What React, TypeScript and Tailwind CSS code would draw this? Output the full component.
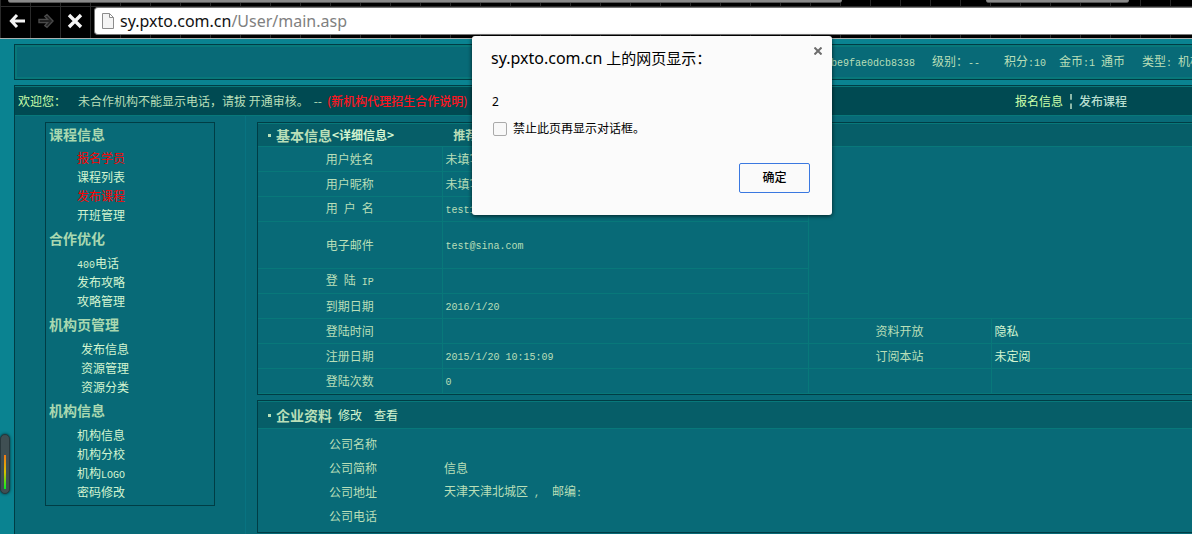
import { Fragment, type ReactNode } from "react";

type Item = { label: ReactNode; hot?: boolean };
type Group = { title: string; indent: string; items: Item[] };

/* Latin letters and digits are set in a half-width face next to the Chinese text. */
function Mono({ children }: { children: ReactNode }) {
  return (
    <span className="font-['Liberation_Mono','Noto_Sans_CJK_SC',monospace] text-[10px] whitespace-pre">
      {children}
    </span>
  );
}

const groups: Group[] = [
  {
    title: "课程信息",
    indent: "pl-[31px]",
    items: [
      { label: "报名学员", hot: true },
      { label: "课程列表" },
      { label: "发布课程", hot: true },
      { label: "开班管理" },
    ],
  },
  {
    title: "合作优化",
    indent: "pl-[31px]",
    items: [
      { label: <><Mono>400</Mono>电话</> },
      { label: "发布攻略" },
      { label: "攻略管理" },
    ],
  },
  {
    title: "机构页管理",
    indent: "pl-[35px]",
    items: [{ label: "发布信息" }, { label: "资源管理" }, { label: "资源分类" }],
  },
  {
    title: "机构信息",
    indent: "pl-[31px]",
    items: [
      { label: "机构信息" },
      { label: "机构分校" },
      { label: <>机构<Mono>LOGO</Mono></> },
      { label: "密码修改" },
    ],
  },
];

type Row = { label: ReactNode; value?: ReactNode; tall?: boolean; right?: [string, string] };

const rows: Row[] = [
  { label: "用户姓名", value: "未填写" },
  { label: "用户昵称", value: "未填写" },
  { label: <>用<Mono> </Mono>户<Mono> </Mono>名</>, value: <Mono>test123</Mono> },
  { label: "电子邮件", value: <Mono>test@sina.com</Mono>, tall: true },
  { label: <>登<Mono> </Mono>陆<Mono> IP</Mono></> },
  { label: "到期日期", value: <Mono>2016/1/20</Mono> },
  { label: "登陆时间", right: ["资料开放", "隐私"] },
  { label: "注册日期", value: <Mono>2015/1/20 10:15:09</Mono>, right: ["订阅本站", "未定阅"] },
  { label: "登陆次数", value: <Mono>0</Mono>, right: ["", ""] },
];

const company: [string, ReactNode][] = [
  ["公司名称", ""],
  ["公司简称", "信息"],
  ["公司地址", <span className="whitespace-pre">天津天津北城区<Mono> ,  </Mono>邮编<Mono>:</Mono></span>],
  ["公司电话", ""],
];

function BrowserBar() {
  return (
    <header className="border-b border-[#a9b0b0] bg-black bg-[linear-gradient(to_right,#2a2a2a_1px,transparent_1px)] bg-size-[30px_100%]">
      <div className="flex h-[3px]">
        <div className="ml-2 w-[70%] rounded-b-sm border-b border-[#555] bg-[#8a8a8a]" />
        <div className="ml-36 w-[12%] rounded-b-sm border-b border-[#555] bg-[#8a8a8a]" />
      </div>
      <div className="mt-[3px] flex h-8 items-start border-t border-[#2d2d2d]">
        <div className="flex h-7 w-[94px] shrink-0 items-center gap-[13px] pl-[9px]">
          <button aria-label="后退">
            <svg className="size-4" viewBox="0 0 16 16" fill="none" stroke="#f5f5f5" strokeWidth="3">
              <path d="M2.5 8H16M8 2L2.4 8L8 14" />
            </svg>
          </button>
          <button aria-label="前进">
            <svg className="size-4" viewBox="0 0 16 16" fill="#222" stroke="#4b4b4b" strokeWidth="1.4">
              <path d="M1 6.4H9.5L6.8 3.4L9 1.6L15 8L9 14.4L6.8 12.6L9.5 9.6H1Z" />
            </svg>
          </button>
          <button aria-label="停止">
            <svg className="size-4" viewBox="0 0 16 16" fill="none" stroke="#f5f5f5" strokeWidth="3.4">
              <path d="M2 2L14 14M14 2L2 14" />
            </svg>
          </button>
        </div>
        <div className="flex h-7 flex-1 items-center rounded-l-sm border border-r-0 border-[#777] bg-white pl-[7px]">
          <svg className="h-4 w-3 shrink-0" viewBox="0 0 12 16" fill="#f4f4f4" stroke="#8c8c8c">
            <path d="M0.5 0.5H7.5L11.5 4.5V15.5H0.5ZM7.5 0.5V4.5H11.5" />
          </svg>
          <div className="ml-[6px] font-['Noto_Sans','Noto_Sans_CJK_SC',sans-serif] text-base leading-6 text-[#111]">
            sy.pxto.com.cn<span className="text-[#808080]">/User/main.asp</span>
          </div>
        </div>
      </div>
    </header>
  );
}

function Sidebar() {
  return (
    <aside className="w-[231px] shrink-0 border-r border-[#087381] pt-[6px] pl-[30px]">
      <nav className="w-[170px] border border-[#003d45] pb-1">
        {groups.map((g, i) => (
          <Fragment key={g.title}>
            <h2
              className={`pl-[3px] text-sm leading-[22px] font-bold text-[#a9d8b0] ${i > 0 ? "pt-[3px] pb-1" : "pb-[3px]"}`}
            >
              {g.title}
            </h2>
            <ul className={g.indent}>
              {g.items.map((it, k) => (
                <li key={k} className="h-[19px] leading-[19px]">
                  <a href="#" className={it.hot ? "text-[#ff0000]" : "text-[#d3f5d0]"}>{it.label}</a>
                </li>
              ))}
            </ul>
          </Fragment>
        ))}
      </nav>
    </aside>
  );
}

function Dialog() {
  return (
    <div
      role="dialog"
      aria-label="网页显示"
      className="absolute top-9 left-[472px] w-[360px] rounded-[3px] bg-[#fbfbfb] pt-[11px] pr-[22px] pb-[22px] pl-[19px] font-['Noto_Sans','Noto_Sans_CJK_SC',sans-serif] text-black shadow-[0_1px_4px_rgba(0,0,0,0.7)]"
    >
      <button aria-label="关闭" className="absolute top-[11px] right-[10px]">
        <svg className="size-2" viewBox="0 0 8 8" stroke="#6d6d6d" strokeWidth="2">
          <path d="M0.5 0.5L7.5 7.5M7.5 0.5L0.5 7.5" />
        </svg>
      </button>
      <h1 className="text-[15px] leading-[22px]">
        <span className="text-base leading-[22px]">sy.pxto.com.cn</span> 上的网页显示：
      </h1>
      <p className="mt-6 pl-px text-xs leading-[18px]">2</p>
      <label className="mt-[9px] flex items-center gap-[6px] pl-[2px] text-xs leading-[18px]">
        <input type="checkbox" className="size-[14px] appearance-none rounded-[2px] border border-[#aaa] bg-[#f8f8f8]" />
        禁止此页再显示对话框。
      </label>
      <div className="mt-[25px] flex justify-end">
        <button className="h-[30px] w-[71px] rounded-[2px] border border-[#3a78e0] bg-[#fafafa] text-xs font-medium">
          确定
        </button>
      </div>
    </div>
  );
}

const line = "border-[#08787a]";
const panel = "border border-r-0 border-[#003d45]";

function PanelTitle({ children }: { children: ReactNode }) {
  return (
    <h2 className="flex items-center gap-[5px] pl-[3px] text-sm font-bold whitespace-nowrap">
      <span className="size-[3px] bg-[#b9dfb8]" />
      {children}
    </h2>
  );
}

export default function App() {
  return (
    <div className="relative flex min-h-screen flex-col overflow-hidden bg-[#0a8391] font-['Noto_Sans_CJK_SC',sans-serif] text-xs text-[#b9dfb8]">
      <BrowserBar />

      <div className="flex flex-1 flex-col pt-[5px] pl-[14px]">
        <section className={panel}>
          <div className={`flex h-[34px] items-center border-2 border-r-0 bg-[#086a77] ${line}`}>
            <div className="flex-1" />
            <div className="flex w-[374px] shrink-0 justify-start whitespace-pre">
              <span className="w-[114px] shrink-0 pl-[13px]"><Mono>be9fae0dcb8338</Mono></span>
              <span className="w-[72px] shrink-0">级别：<Mono>--</Mono></span>
              <span className="w-[55px] shrink-0">积分<Mono>:10</Mono></span>
              <span className="w-[83px] shrink-0">金币<Mono>:1 </Mono>通币</span>
              <span className="shrink-0">类型<Mono>: </Mono>机构</span>
            </div>
          </div>
        </section>

        <section className="mt-[5px] flex flex-1 flex-col border-t border-l border-[#003d45] bg-[#086a77]">
          <div className={`flex h-[29px] items-center border-t bg-[#004a52] pl-[3px] ${line}`}>
            <span className="w-[60px] text-[#ccffaa]">欢迎您：</span>
            <span className="flex gap-[5px] whitespace-pre">
              <span>未合作机构不能显示电话，请拔 开通审核。</span>
              <span>--</span>
              <a href="#" className="font-medium text-[#ff1420]">(新机构代理招生合作说明)</a>
            </span>
            <span className="flex-1" />
            <span className="flex w-[177px] shrink-0 items-center">
              <a href="#" className="text-[#ccffaa]">报名信息</a>
              <span className="mx-[7px] h-[15px] border-l-2 border-dashed border-[#8cb8a8]" />
              <a href="#" className="font-medium text-[#b9dfd0]">发布课程</a>
            </span>
          </div>

          <div className={`flex flex-1 border-t ${line}`}>
            <Sidebar />
            <main className="min-w-0 flex-1 pt-[6px] pl-[11px]">
              <section className={panel}>
                <div className={`flex h-[23px] items-center border-t bg-[#065e68] pl-[7px] font-bold ${line}`}>
                  <PanelTitle>基本信息</PanelTitle>
                  <a href="#" className="text-[#d3f5d0]">&lt;详细信息&gt;</a>
                  <span className="ml-[59px]">推荐人</span>
                </div>
                <table className={`w-full table-fixed border-collapse border-b ${line}`}>
                  <colgroup>
                    <col className="w-[184px]" />
                    <col className="w-[366px]" />
                    <col className="w-[183px]" />
                    <col />
                  </colgroup>
                  <tbody>
                    {rows.map((r, i) => (
                      <tr key={i} className={r.tall ? "h-[47px]" : "h-[25px]"}>
                        <th scope="row" className={`border-t border-r p-0 font-normal ${line}`}>{r.label}</th>
                        <td className={`border-t border-r p-0 pl-[3px] ${line}`}>{r.value}</td>
                        {i === 0 && <td rowSpan={6} colSpan={2} className={`border-t p-0 ${line}`} />}
                        {r.right && (
                          <>
                            <td className={`border-t border-r p-0 text-center ${line}`}>{r.right[0]}</td>
                            <td className={`border-t p-0 pl-[3px] text-[#d3f5d0] ${line}`}>{r.right[1]}</td>
                          </>
                        )}
                      </tr>
                    ))}
                  </tbody>
                </table>
              </section>

              <section className={`mt-[5px] ${panel}`}>
                <div className={`flex h-7 items-center border-t border-b bg-[#065e68] pl-[7px] ${line}`}>
                  <PanelTitle>企业资料</PanelTitle>
                  <a href="#" className="ml-[6px] text-[#d3f5d0]">修改</a>
                  <a href="#" className="ml-3 text-[#d3f5d0]">查看</a>
                </div>
                <table className="mt-[3px] mb-1 w-full table-fixed border-collapse">
                  <colgroup>
                    <col className="w-[186px]" />
                    <col />
                  </colgroup>
                  <tbody>
                    {company.map(([k, v]) => (
                      <tr key={k} className="h-6">
                        <th scope="row" className="p-0 pl-[4px] font-normal">{k}</th>
                        <td className="p-0">{v}</td>
                      </tr>
                    ))}
                  </tbody>
                </table>
              </section>
            </main>
          </div>
        </section>
      </div>

      <div className="absolute top-[434px] left-0 flex h-[60px] w-[10px] items-end justify-center rounded-[5px] border border-[#28383c] bg-[#3f4f53] pb-1 shadow-[0_0_3px_rgba(0,0,0,0.7)]">
        <div className="h-[34px] w-[2px] bg-[linear-gradient(to_bottom,#f07818,#d8c000,#00f020)]" />
      </div>

      <Dialog />
    </div>
  );
}
